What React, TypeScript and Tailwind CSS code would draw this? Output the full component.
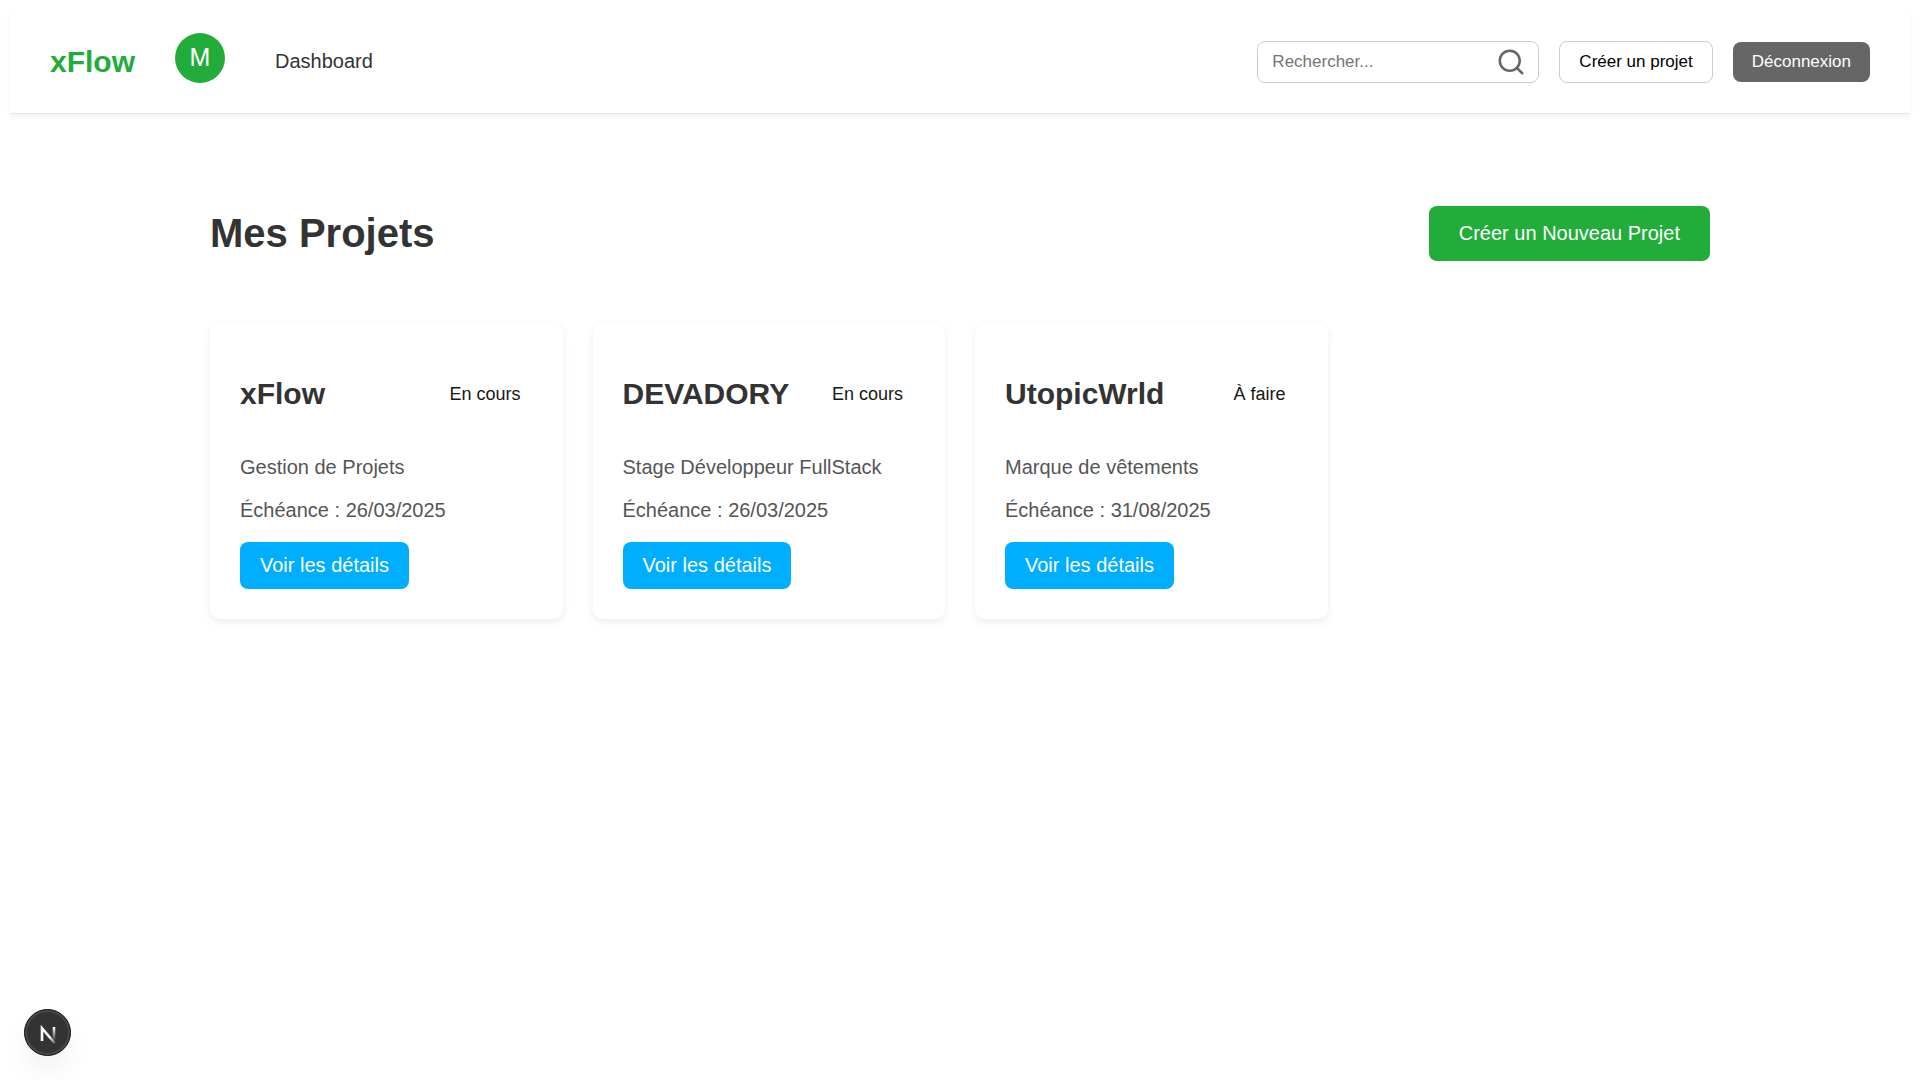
import React from 'react';
import { Search } from 'lucide-react';

const projects = [
  { name: 'xFlow', status: 'En cours', description: 'Gestion de Projets', due: '26/03/2025' },
  { name: 'DEVADORY', status: 'En cours', description: 'Stage Développeur FullStack', due: '26/03/2025' },
  { name: 'UtopicWrld', status: 'À faire', description: 'Marque de vêtements', due: '31/08/2025' },
];

type Project = (typeof projects)[number];

function Header() {
  return (
    <header className="flex items-center justify-between border-b border-[#e5e5e5] bg-white px-10 pt-[23px] pb-[22px] shadow-[0_3px_6px_rgba(0,0,0,0.05)]">
      <nav className="flex items-center">
        <a href="#" className="mr-10 text-3xl leading-9 font-bold text-[#22ad3a]">xFlow</a>
        <a href="#profil" aria-label="Profil" className="mr-[50px] pb-2">
          <span className="flex size-[50px] items-center justify-center rounded-full bg-[#22ad3a] pb-0.5 text-[25px] leading-none text-white">M</span>
        </a>
        <a href="#dashboard" className="pb-0.5 text-xl leading-6 text-[#333]">Dashboard</a>
      </nav>
      <div className="flex items-center gap-5 text-[17px] leading-5">
        <form role="search" className="flex h-[42px] w-[282px] items-center rounded-lg border border-[#ccc] px-3" onSubmit={(e) => e.preventDefault()}>
          <input type="search" aria-label="Rechercher" placeholder="Rechercher..." className="min-w-0 flex-1 pl-[2px] outline-none placeholder:text-[#757575]" />
          <button type="submit" aria-label="Lancer la recherche" className="text-[#666]">
            <Search size={30} />
          </button>
        </form>
        <button type="button" className="h-[42px] rounded-lg border border-[#ccc] bg-white px-[19px] text-black">Créer un projet</button>
        <button type="button" className="h-10 rounded-lg bg-[#666] px-[19px] text-white">Déconnexion</button>
      </div>
    </header>
  );
}

function ProjectCard({ project }: { project: Project }) {
  return (
    <article className="rounded-[10px] bg-white p-[30px] shadow-[0_3px_8px_rgba(0,0,0,0.08)]">
      <div className="flex items-center justify-between pt-6 pb-[26px]">
        <h2 className="text-3xl leading-[33px] font-bold text-[#333]">{project.name}</h2>
        <span className="px-3 text-lg leading-5 text-[#171717]">{project.status}</span>
      </div>
      <p className="mt-5 text-xl leading-[23px] text-[#555]">{project.description}</p>
      <p className="mt-5 text-xl leading-[23px] text-[#555]">Échéance : {project.due}</p>
      <a href="#details" className="mt-5 inline-block rounded-lg bg-[#00aeff] px-5 py-3 align-top text-xl leading-[23px] text-white">Voir les détails</a>
    </article>
  );
}

function DevBadge() {
  return (
    <button
      type="button"
      aria-label="Next.js"
      className="fixed bottom-6 left-6 flex size-[47px] items-center justify-center rounded-full border border-[#111] bg-[#333] shadow-[inset_0_0_0_2px_#484848,0_16px_32px_-8px_rgba(0,0,0,0.12)]"
    >
      <svg width="46" height="46" viewBox="0 0 46 46" fill="none" className="shrink-0">
        <defs>
          <linearGradient id="diag" x1="25" y1="26" x2="31" y2="33" gradientUnits="userSpaceOnUse">
            <stop stopColor="#fff" />
            <stop offset="1" stopColor="#fff" stopOpacity="0.2" />
          </linearGradient>
          <linearGradient id="stem" x1="30" y1="17" x2="30" y2="31" gradientUnits="userSpaceOnUse">
            <stop stopColor="#fff" />
            <stop offset="1" stopColor="#fff" stopOpacity="0" />
          </linearGradient>
        </defs>
        <path d="M17 31V18.2L29.6 33" stroke="url(#diag)" strokeWidth="2.6" />
        <path d="M29 17v14" stroke="url(#stem)" strokeWidth="2.6" />
      </svg>
    </button>
  );
}

export default function App() {
  return (
    <div className="bg-white p-[10px] font-['Liberation_Sans',Arial,sans-serif]">
      <Header />
      <main className="mx-auto max-w-[1500px] pt-[92px]">
        <div className="mb-[62px] flex items-center justify-between">
          <h1 className="pb-0.5 text-[40px] leading-[46px] font-bold text-[#333]">Mes Projets</h1>
          <a href="#nouveau" className="rounded-lg bg-[#22ad3a] px-[30px] py-4 text-xl leading-[23px] text-white">Créer un Nouveau Projet</a>
        </div>
        <section className="grid grid-cols-4 gap-[30px]" aria-label="Projets">
          {projects.map((project) => (
            <ProjectCard key={project.name} project={project} />
          ))}
        </section>
      </main>
      <DevBadge />
    </div>
  );
}
